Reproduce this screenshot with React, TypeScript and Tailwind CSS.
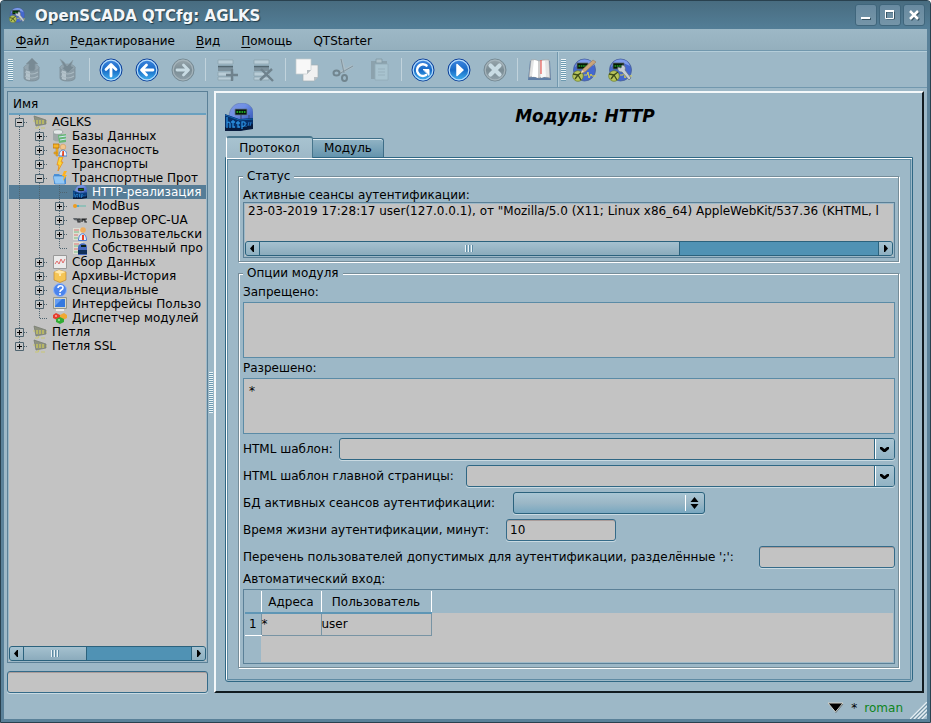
import React, { useState } from "react";

type IconProps = { size?: number };

function Globe({ tool, size = 24 }: { tool?: "pencil" | "wrench"; size?: number }) {
  return (
    <svg width={size} height={size} viewBox="0 0 24 24" aria-hidden="true">
      <circle cx="12.5" cy="12" r="11" fill="#4468cf" stroke="#4a6196" strokeWidth=".8" />
      <path d="M3 9a10 10 0 0 1 19-1Q12 2 3 9" fill="#7d9bea" />
      <path d="M5 5h11v6H5z" fill="#051a05" stroke="#5c6570" strokeWidth=".8" />
      <path d="M6.500 8h8" stroke="#1f9c25" strokeWidth="1.600" strokeDasharray="1.600 .7" />
      <circle cx="6" cy="18" r="5.300" fill="#b8c45b" stroke="#6c7c25" strokeWidth=".7" />
      <path d="M3 21l3-4 3 5M1 16l5 1 4-3" stroke="#3e4d18" strokeWidth="1.300" fill="none" />
      <path d="M12 17h3l1-3 1 6 2-4 1 2h4" stroke="#d9cd50" fill="none" />
      {tool === "pencil" && (
        <>
          <path d="M9 15l2-4L21 2l3 2-11 10z" fill="#c9a57c" stroke="#9a7a5a" strokeWidth=".6" />
          <path d="M9 15l1-3 2 2z" fill="#f1dfc0" />
        </>
      )}
      {tool === "wrench" && (
        <path d="M10 9l3 1 1-3c3 0 4 3 3 5l6 8-2 2-7-8c-3 0-5-2-4-5z" fill="#c5ccd3" stroke="#606d78" strokeWidth=".7" />
      )}
    </svg>
  );
}

function HttpIcon({ size = 28 }: IconProps) {
  return (
    <svg width={size} height={size} viewBox="0 0 28 28" className="shrink-0" aria-hidden="true">
      <defs>
        <linearGradient id={"dome-" + size} x1="0" y1="0" x2="1" y2="1">
          <stop offset="0" stopColor="#8098dc" />
          <stop offset=".4" stopColor="#6f8fe6" />
          <stop offset="1" stopColor="#2347ab" />
        </linearGradient>
      </defs>
      <path d="M4 17C3 6 9 0 17 0c6 0 11 4 11 9v14H4z" fill={"url(#dome-" + size + ")"} stroke="#5a74a8" strokeWidth=".5" />
      <path d="M10 6h12v6H10z" fill="#04140a" stroke="#65778f" strokeWidth=".8" />
      <path d="M11.500 9h9" stroke="#1fa020" strokeWidth="2.200" strokeDasharray="1.700 .8" />
      <path d="M16 12v4M24 12v5M26 15v3" stroke="#3d4f80" strokeWidth="1.300" />
      <path d="M0 11l14 5 14-1v9l-13 4H0z" fill="#06306a" />
      <path d="M0 24l14 1 14-4v5l-13 2H0z" fill="#071a3c" />
      <path d="M0 12l14 5 14-1" stroke="#1463ae" fill="none" />
      <path d="M2 14v11m0-5q3-2 3 1v4M8 17v7h2m-4-5h4M13 18v6h2m-4-4h4M17 26v-7q4-1 3 3-1 2-3 1" stroke="#2b8fdd" strokeWidth="1.300" fill="none" />
      <path d="M21 20v1m0 2v1m2-1l1-4m1 4l1-4" stroke="#2373c0" fill="none" />
    </svg>
  );
}

type RoundKind = "up" | "left" | "right" | "reload" | "play" | "stop";

function Round({ kind }: { kind: RoundKind }) {
  const off = kind === "right" || kind === "stop";
  return (
    <svg width="24" height="24" viewBox="0 0 24 24" aria-hidden="true">
      <defs>
        <linearGradient id={"round-" + kind} x1="0" y1="0" x2="0" y2="1">
          <stop offset="0" stopColor={off ? "#9ba8ae" : "#4287e0"} />
          <stop offset=".5" stopColor={off ? "#7b8d95" : "#176bc7"} />
          <stop offset="1" stopColor={off ? "#90a1aa" : "#45b5f0"} />
        </linearGradient>
      </defs>
      <circle cx="12" cy="12" r="11" fill={"url(#round-" + kind + ")"} stroke={off ? "#768a94" : "#0f3f96"} />
      <circle cx="12" cy="12" r="9.800" fill="none" stroke={off ? "#a5b4bb" : "#b7dcfa"} strokeWidth="1.200" />
      <g stroke={off ? "#c8dbe3" : "#fff"} strokeWidth="2.800" fill="none" strokeLinecap="round" strokeLinejoin="round">
        {kind === "up" && <path d="M12 18V7M7 11.500l5-5 5 5" />}
        {kind === "left" && <path d="M18 12H7M11.500 7l-5 5 5 5" />}
        {kind === "right" && <path d="M6 12h11M12.500 7l5 5-5 5" />}
        {kind === "stop" && <path d="M7.500 7.500l9 9M16.500 7.500l-9 9" strokeWidth="4.200" />}
        {kind === "reload" && (
          <>
            <path d="M15.500 7.500A5.800 5.800 0 1 0 15 17" strokeWidth="2.600" />
            <path d="M12.500 11.500h5.500v5.500z" fill="#fff" strokeWidth="1" />
          </>
        )}
        {kind === "play" && <path d="M10 6.500l6 5.500-6 5.500z" fill="#fff" strokeWidth="1.500" />}
      </g>
    </svg>
  );
}

function Database({ save }: { save?: boolean }) {
  return (
    <svg width="24" height="24" viewBox="0 0 24 24" aria-hidden="true">
      <path d="M5 9v11c0 4 15 4 15 0V9z" fill="#8b9ca6" stroke="#7b8d97" strokeWidth=".8" />
      <path d="M7 12v9q2 1 4 1v-9z" fill="#b4c3cb" />
      <path d="M6 14q7 4 13 0M6 18q7 4 13 0" stroke="#a9b9c1" fill="none" strokeWidth="1.200" />
      <ellipse cx="12.500" cy="9.500" rx="7.500" ry="3.500" fill="#94a5af" stroke="#82949e" strokeWidth=".6" />
      {save ? (
        <path d="M5 1l4 3 3 4 6-6-2 6 3 1-6 6-6-5 2-1z" fill="#788a94" stroke="#8fa2ad" strokeWidth=".6" />
      ) : (
        <path d="M13 0l6 6h-3q1 5-1 7h-5q-1-3 0-7H7z" fill="#788a94" stroke="#8a9ca6" strokeWidth=".6" />
      )}
    </svg>
  );
}

function Rows({ remove }: { remove?: boolean }) {
  return (
    <svg width="24" height="24" viewBox="0 0 24 24" aria-hidden="true">
      <path d="M3 2h15v4H3zM3 14h15v4H3zM3 19h15v3H3z" fill="#b9cdd7" stroke="#8ba0ac" strokeWidth=".7" />
      <path d="M3 8h15v5H3z" fill="#7d919c" />
      <path d="M3 8.500h15" stroke="#52666f" strokeWidth="1.500" />
      {remove ? (
        <path d="M10 11l12 12M21 11L9 22" stroke="#6f828d" strokeWidth="2.400" />
      ) : (
        <path d="M17 11v12M11 17h12" stroke="#6f828d" strokeWidth="2.400" />
      )}
    </svg>
  );
}

function Copy() {
  return (
    <svg width="24" height="24" viewBox="0 0 24 24" aria-hidden="true">
      <path d="M8 7h15v12l-4 4H8z" fill="#f1f1f1" stroke="#a5afb5" strokeWidth=".7" />
      <path d="M19 23v-4h4z" fill="#b9c0c4" />
      <path d="M1 1h15v11l-4 4H1z" fill="#f8f8f8" stroke="#c4cbcf" strokeWidth=".7" />
      <path d="M12 16v-4h4z" fill="#b5bcc0" />
    </svg>
  );
}

function Scissors() {
  return (
    <svg width="24" height="24" viewBox="0 0 24 24" fill="none" aria-hidden="true">
      <path d="M10 1l4 13M22 8L8 15" stroke="#abbcc5" strokeWidth="2.600" />
      <path d="M10 1l3 14M22 8L8 16" stroke="#81949e" />
      <ellipse cx="5.500" cy="15" rx="3" ry="2.500" stroke="#71858f" strokeWidth="2" />
      <ellipse cx="13.500" cy="20" rx="2.500" ry="3" stroke="#71858f" strokeWidth="2" />
    </svg>
  );
}

function Paste() {
  return (
    <svg width="24" height="24" viewBox="0 0 24 24" aria-hidden="true">
      <path d="M4 3h16v18H4z" fill="#8ca2ad" />
      <path d="M9 1h6v4H9z" fill="#adc0c9" stroke="#8299a4" strokeWidth=".8" />
      <path d="M8 6h13v16H8z" fill="#a8c3cf" stroke="#93abb7" strokeWidth=".8" />
      <path d="M11 11h7M11 14h7M11 17h7" stroke="#98b1bd" />
    </svg>
  );
}

function Book() {
  return (
    <svg width="24" height="24" viewBox="0 0 24 24" aria-hidden="true">
      <path d="M3 3h20l1 19H1z" fill="#5f7ea6" />
      <path d="M4 2q4-1 8 1 5-2 10-1l1 18q-6-2-11 0-5-2-10-1z" fill="#e4e4e4" stroke="#9e9e9e" strokeWidth=".6" />
      <path d="M11 3v17q-4-2-6-1L7 2z" fill="#fff" />
      <path d="M14 3v17q5-2 5-1L18 3z" fill="#f8f8f8" />
      <path d="M12 3v17" stroke="#b9b9b9" />
      <path d="M14 2v14" stroke="#e85b55" strokeWidth="1.200" />
    </svg>
  );
}

type TreeIconKind = "station" | "db" | "security" | "bolt" | "folder" | "http" | "modbus" | "opc" | "user" | "own" | "chart" | "box" | "help" | "screen" | "modules";

function TreeIcon({ kind }: { kind: TreeIconKind }) {
  if (kind === "http") return <HttpIcon size={14} />;
  return (
    <svg width="14" height="14" viewBox="0 0 14 14" className="shrink-0" aria-hidden="true">
      {kind === "station" && (
        <>
          <path d="M1 1l12 4v4L3 11z" fill="#8d917f" stroke="#747a6e" strokeWidth=".7" />
          <path d="M4 5v4M7 5v4M10 5v4" stroke="#c9c65a" strokeWidth="1.400" />
          <path d="M2 13h3l1-2m2 2h4M0 6h2m11 1h1" stroke="#c9c775" strokeWidth="1.200" fill="none" />
        </>
      )}
      {kind === "db" && (
        <>
          <path d="M0 3v8q5 3 9 0V3z" fill="#9fa8a8" />
          <ellipse cx="5" cy="3" rx="4.800" ry="2.300" fill="#e4e8e8" stroke="#858e8e" strokeWidth=".6" />
          <path d="M5 6l8-1v8l-7 1z" fill="#68b776" />
          <path d="M6 8l7-1M7 11l6-1" stroke="#d5e8fa" strokeWidth="1" />
        </>
      )}
      {kind === "security" && (
        <>
          <path d="M3 4h2v9H3zM1 9h3v2H1z" fill="#efb72d" stroke="#c07d10" strokeWidth=".5" />
          <path d="M0 1h6v4H0z" fill="#f5b428" stroke="#b97407" strokeWidth=".8" />
          <circle cx="10" cy="4" r="2.800" fill="#f3c58b" stroke="#ce914b" strokeWidth=".5" />
          <path d="M6 13c0-8 8-8 8 0z" fill="#eef3fb" stroke="#4c7fc4" strokeWidth="1" />
          <path d="M9.300 8H11v5H9z" fill="#e24826" />
        </>
      )}
      {kind === "bolt" && <path d="M6 0h4L8 5h2L5 14l1-6H4z" fill="#fbd638" stroke="#e88c18" strokeWidth=".8" />}
      {kind === "folder" && (
        <>
          <path d="M1 3h5l1 1h6v9H1z" fill="#4a91d9" />
          <path d="M0 5h11l1 8H2z" fill="#91c7f6" stroke="#3d7fc7" strokeWidth=".6" />
          <path d="M11 0h3l-2 4h2l-4 6 1-5H9z" fill="#ffb31f" />
        </>
      )}
      {kind === "modbus" && (
        <>
          <path d="M3 7h10" stroke="#4da9d0" strokeWidth="2" />
          <path d="M6 7h7" stroke="#d8d5a0" />
          <circle cx="2" cy="7" r="2" fill="#ee9c20" />
        </>
      )}
      {kind === "opc" && (
        <>
          <path d="M0 5h4l2 3-5-1z" fill="#61666b" />
          <path d="M5 9V6h2v3zm4 0V6h2v1H9m5-1h-2v3h2" stroke="#242628" fill="none" strokeWidth="1.200" />
        </>
      )}
      {(kind === "user" || kind === "own") && (
        <>
          <path d="M0 1h10v12H0z" fill="#dedfd4" />
          <path d="M1 3h5M1 8h4" stroke="#dc7474" />
          <path d="M1 5h5M1 11h4" stroke="#78ba82" />
        </>
      )}
      {kind === "user" && (
        <>
          <circle cx="10" cy="3" r="2.800" fill="#eead5c" />
          <path d="M5.500 13.500c0-9 8-9 8 0z" fill="#e7edf7" stroke="#4777d0" strokeWidth="1" />
          <path d="M9 8h2v5H9z" fill="#ea4324" />
        </>
      )}
      {kind === "own" && (
        <>
          <path d="M5 14V7c0-6 9-6 9-1v8z" fill="#4569bd" />
          <path d="M8 4h5v2H8z" fill="#0c2115" />
          <path d="M5 9h9v4H5z" fill="#102f59" />
        </>
      )}
      {kind === "chart" && (
        <>
          <path d="M.5.5h13v13H.5z" fill="#ebebeb" stroke="#999" />
          <path d="M2 9l2-3 2 3 2-5 2 4 2-4" fill="none" stroke="#e06b6b" />
        </>
      )}
      {kind === "box" && (
        <>
          <path d="M1 3l5-2 7 2v8l-6 2.500L1 11z" fill="#f5c555" stroke="#ba7e22" strokeWidth=".6" />
          <path d="M1 3l6 2 6-2-7-2z" fill="#ffe9ac" />
          <path d="M7 5v2" stroke="#ffe9ac" strokeWidth="2" />
        </>
      )}
      {kind === "help" && (
        <>
          <circle cx="7" cy="7" r="6.500" fill="#4b84ed" stroke="#91b3f5" />
          <path d="M5 5c0-3 5-3 5-.3C10 7 7 6.500 7 9" stroke="#fff" strokeWidth="1.600" fill="none" />
          <circle cx="7" cy="11" r="1" fill="#fff" />
        </>
      )}
      {kind === "screen" && (
        <>
          <path d="M.5.500h13v11H.5z" fill="#d7d7c8" stroke="#92978f" />
          <path d="M2 2h10v8H2z" fill="#3479df" />
          <path d="M2 2h7L2 9z" fill="#669ef2" />
          <path d="M3 13h8" stroke="#ededed" strokeWidth="2" />
        </>
      )}
      {kind === "modules" && (
        <>
          <path d="M0 4l3-2 4 2v3L4 9 0 7z" fill="#e63d2d" />
          <path d="M7 4l4-2 3 2v3l-4 2-3-2z" fill="#f1a832" />
          <path d="M3 8l4-2 4 2v3l-4 2-4-2z" fill="#32ac35" />
          <circle cx="6" cy="9" r="1" fill="#a5ed97" />
          <circle cx="3" cy="5" r="1" fill="#ffaaa0" />
        </>
      )}
    </svg>
  );
}

type Node = { level: number; text: string; icon: TreeIconKind; box?: "+" | "-"; last?: boolean };

const nodes: Node[] = [
  { level: 0, text: "AGLKS", icon: "station", box: "-" },
  { level: 1, text: "Базы Данных", icon: "db", box: "+" },
  { level: 1, text: "Безопасность", icon: "security", box: "+" },
  { level: 1, text: "Транспорты", icon: "bolt", box: "+" },
  { level: 1, text: "Транспортные Прот", icon: "folder", box: "-" },
  { level: 2, text: "HTTP-реализация", icon: "http" },
  { level: 2, text: "ModBus", icon: "modbus", box: "+" },
  { level: 2, text: "Сервер OPC-UA", icon: "opc", box: "+" },
  { level: 2, text: "Пользовательски", icon: "user", box: "+" },
  { level: 2, text: "Собственный про", icon: "own", last: true },
  { level: 1, text: "Сбор Данных", icon: "chart", box: "+" },
  { level: 1, text: "Архивы-История", icon: "box", box: "+" },
  { level: 1, text: "Специальные", icon: "help", box: "+" },
  { level: 1, text: "Интерфейсы Пользо", icon: "screen", box: "+" },
  { level: 1, text: "Диспетчер модулей", icon: "modules", last: true },
  { level: 0, text: "Петля", icon: "station", box: "+" },
  { level: 0, text: "Петля SSL", icon: "station", box: "+", last: true },
];

function Guide() {
  return (
    <svg width="20" height="14" viewBox="0 0 20 14" className="shrink-0" aria-hidden="true">
      <path d="M10.500 0v14" stroke="#4f6470" strokeDasharray="1 1" />
    </svg>
  );
}

function Branch({ box, last }: { box?: "+" | "-"; last?: boolean }) {
  return (
    <svg width="20" height="14" viewBox="0 0 20 14" className="shrink-0" aria-hidden="true">
      <path d={last ? "M10.500 0v8" : "M10.500 0v14"} stroke="#4f6470" strokeDasharray="1 1" />
      <path d="M11 7.500h8" stroke="#4f6470" strokeDasharray="1 1" />
      {box && <path d="M6.500 3.500h8v8h-8z" fill="#c3c3c3" stroke="#4f6470" />}
      {box && <path d={box === "+" ? "M8 7.500h5M10.500 5v5" : "M8 7.500h5"} stroke="#000" />}
    </svg>
  );
}

function TreeRow({ node, selected, onSelect }: { node: Node; selected: boolean; onSelect: () => void }) {
  return (
    <li role="treeitem" aria-selected={selected}>
      <button
        type="button"
        onClick={onSelect}
        className={
          selected
            ? "flex h-[14px] w-full items-center overflow-hidden bg-[#567d97] text-left leading-[14px] whitespace-nowrap text-white"
            : "flex h-[14px] w-full items-center overflow-hidden text-left leading-[14px] whitespace-nowrap"
        }
      >
        {Array.from({ length: node.level }, (_, i) => (
          <Guide key={i} />
        ))}
        <Branch box={node.box} last={node.last} />
        <span className="ml-1 flex w-[19px] shrink-0">
          <TreeIcon kind={node.icon} />
        </span>
        {node.text}
      </button>
    </li>
  );
}

function Arrow({ dir }: { dir: "left" | "right" | "down" }) {
  return (
    <svg width="9" height="9" viewBox="0 0 9 9" aria-hidden="true">
      {dir === "left" && <path d="M6 1v7H5L2 4.500 5 1z" fill="#000" />}
      {dir === "right" && <path d="M3 1v7h1l3-3.500L4 1z" fill="#000" />}
      {dir === "down" && <path d="M0 2h2l2.500 2L7 2h2v2L5.500 7h-2L0 4z" fill="#000" />}
    </svg>
  );
}

function ScrollBar({ thumb }: { thumb: string }) {
  return (
    <div className="flex h-[15px] shrink-0 overflow-hidden rounded-[3px] border border-[#2b627d] bg-[#5092b4]">
      <button type="button" aria-label="Назад" className="flex w-[14px] shrink-0 items-center justify-center border-r border-[#2b627d] bg-linear-to-b from-[#a7c3d1] to-[#8eb0c1]">
        <Arrow dir="left" />
      </button>
      <div className="flex min-w-0 flex-1">
        <div className={thumb}>
          <div className="h-[7px] w-[9px] bg-[repeating-linear-gradient(to_right,#eaf4f8_0_1px,#5c8ba4_1px_2px,#9cb9c8_2px_3px)]" />
        </div>
      </div>
      <button type="button" aria-label="Вперёд" className="flex w-[14px] shrink-0 items-center justify-center border-l border-[#2b627d] bg-linear-to-b from-[#a7c3d1] to-[#8eb0c1]">
        <Arrow dir="right" />
      </button>
    </div>
  );
}

function Tool({ label, children }: { label: string; children: React.ReactNode }) {
  return (
    <button type="button" aria-label={label} className="flex h-[35px] w-9 shrink-0 items-center justify-center">
      {children}
    </button>
  );
}

function Sep() {
  return (
    <div className="flex w-2 shrink-0 justify-center">
      <div className="h-[23px] w-px bg-[#c1d3dc]" />
    </div>
  );
}

function Grip() {
  return <div className="h-[22px] w-[5px] shrink-0 bg-[repeating-linear-gradient(to_bottom,#edf5f8_0_1px,#6e9ab0_1px_2px)]" />;
}

function Combo({ id, label, labelClass }: { id: string; label: string; labelClass: string }) {
  return (
    <div className="flex h-[22px] items-center gap-[6px]">
      <label htmlFor={id} className={"shrink-0 whitespace-nowrap " + labelClass}>{label}</label>
      <div className="relative h-[22px] min-w-0 flex-1">
        <select id={id} className="block h-full w-full appearance-none rounded-[3px] border border-[#2f6784] bg-[#c3c3c3] shadow-[0_1px_0_#c9dae2]">
          <option></option>
        </select>
        <span className="pointer-events-none absolute top-px right-px bottom-px flex w-[19px] items-center justify-center rounded-r-[2px] border-l border-white bg-linear-to-b from-[#a9c4d2] to-[#92b3c4] pr-[2px] shadow-[-1px_0_0_#2f6784]">
          <Arrow dir="down" />
        </span>
      </div>
    </div>
  );
}

const groupBox = "min-w-0 border border-[#768d99] pr-[3px] pl-1 shadow-[inset_1px_1px_0_#fff,1px_1px_0_#fff]";
const textField = "rounded-[3px] border border-[#356b89] bg-[#c3c3c3] px-[3px] shadow-[inset_0_1px_0_#a99c9a,0_1px_0_#c9dae2] outline-none";
const textArea = "block h-14 w-full shrink-0 resize-none border border-[#5b8ba6] bg-[#c3c3c3] px-[5px] py-[3px] outline-none";
const windowButton = "flex size-[22px] items-center justify-center rounded-[3px] border border-[#40667c] bg-linear-to-b from-[#688aa0] to-[#7595a8]";

export default function App() {
  const [selected, setSelected] = useState(5);
  const [tab, setTab] = useState(0);
  return (
    <div className="flex h-screen min-h-[600px] w-full flex-col overflow-hidden rounded-t-[4px] border border-[#29414f] bg-[#5a8199] font-['DejaVu_Sans',sans-serif] text-[12px] text-black">
      <header className="flex h-7 shrink-0 items-center bg-linear-to-b from-[#486c80] to-[#537e97] pr-[5px] pl-2">
        <Globe tool="wrench" size={16} />
        <h1 className="ml-[10px] flex-1 pt-[2px] text-[15px] font-bold text-[#f4f7f9] [text-shadow:1px_1px_1px_#1f3a48]">OpenSCADA QTCfg: AGLKS</h1>
        <div className="flex gap-[2px]">
          <button type="button" aria-label="Свернуть" className={windowButton}>
            <svg width="12" height="12" viewBox="0 0 12 12"><path d="M2 10h9" stroke="#385463" strokeWidth="2" /><path d="M1 9h9" stroke="#fff" strokeWidth="2" /></svg>
          </button>
          <button type="button" aria-label="Развернуть" className={windowButton}>
            <svg width="12" height="12" viewBox="0 0 12 12" fill="none"><path d="M2.500 3h8v7h-8z" stroke="#385463" /><path d="M1.500 2.500h8v7h-8z" stroke="#fff" /><path d="M1 2h9" stroke="#fff" strokeWidth="2" /></svg>
          </button>
          <button type="button" aria-label="Закрыть" className={windowButton}>
            <svg width="12" height="12" viewBox="0 0 12 12" fill="none"><path d="M3 3l8 8M11 3l-8 8" stroke="#385463" strokeWidth="2.500" /><path d="M2 2l8 8M10 2l-8 8" stroke="#fff" strokeWidth="2.500" /></svg>
          </button>
        </div>
      </header>

      <div className="mx-[3px] mb-[3px] flex min-h-0 flex-1 flex-col bg-[#9db8c7]">
        <nav className="flex h-[22px] shrink-0 items-center gap-[21px] border-b border-[#7298ae] bg-linear-to-b from-[#9db8c6] to-[#94afbd] px-3 pt-[2px]">
          <button type="button"><u className="underline-offset-2">Ф</u>айл</button>
          <button type="button"><u className="underline-offset-2">Р</u>едактирование</button>
          <button type="button"><u className="underline-offset-2">В</u>ид</button>
          <button type="button"><u className="underline-offset-2">П</u>омощь</button>
          <button type="button">QTStarter</button>
        </nav>

        <div className="flex h-[37px] shrink-0 items-center border-t border-b border-t-[#b4cdd9] border-b-[#7298ae] pl-1" role="toolbar">
          <Grip />
          <Tool label="Загрузить"><Database /></Tool>
          <Tool label="Сохранить"><Database save /></Tool>
          <Sep />
          <Tool label="Вверх"><Round kind="up" /></Tool>
          <Tool label="Назад"><Round kind="left" /></Tool>
          <Tool label="Вперёд"><Round kind="right" /></Tool>
          <Sep />
          <Tool label="Добавить"><Rows /></Tool>
          <Tool label="Удалить"><Rows remove /></Tool>
          <Sep />
          <Tool label="Копировать"><Copy /></Tool>
          <Tool label="Вырезать"><Scissors /></Tool>
          <Tool label="Вставить"><Paste /></Tool>
          <Sep />
          <Tool label="Обновить"><Round kind="reload" /></Tool>
          <Tool label="Запустить"><Round kind="play" /></Tool>
          <Tool label="Остановить"><Round kind="stop" /></Tool>
          <Sep />
          <Tool label="Руководство"><Book /></Tool>
          <div className="mr-[3px] h-full w-px bg-[#7298ae] shadow-[1px_0_0_#b4cdd9]" />
          <Grip />
          <Tool label="Разработка"><Globe tool="pencil" /></Tool>
          <Tool label="Конфигурация"><Globe tool="wrench" /></Tool>
        </div>

        <main className="flex min-h-0 flex-1 px-[3px] pt-[3px]">
          <aside className="flex w-[201px] shrink-0 flex-col">
            <div className="flex min-h-0 flex-1 flex-col border border-[#5b8097] p-px">
              <div className="flex h-[22px] shrink-0 items-center border-b-2 border-[#69a0bf] pt-[2px] pl-1">Имя</div>
              <div className="flex min-h-0 flex-1 flex-col bg-[#c3c3c3]">
                <ul role="tree" className="min-h-0 flex-1 overflow-hidden">
                  {nodes.map((n, i) => (
                    <TreeRow key={i} node={n} selected={selected === i} onSelect={() => setSelected(i)} />
                  ))}
                </ul>
                <ScrollBar thumb="flex w-[38%] items-center justify-center border-r border-[#2b627d] bg-linear-to-b from-[#a5c1cf] to-[#8babbc]" />
              </div>
            </div>
            <input aria-label="Имя элемента" className={"mt-2 h-[22px] w-full shrink-0 " + textField} />
          </aside>

          <div className="flex w-[6px] shrink-0 items-center justify-center">
            <div className="h-[41px] w-[4px] bg-[repeating-linear-gradient(to_bottom,#edf5f8_0_1px,#6e9ab0_1px_2px)]" />
          </div>

          <section className="flex min-w-0 flex-1 flex-col border-2 border-t-[#f4f8fa] border-r-[#111b20] border-b-[#111b20] border-l-[#f4f8fa] px-[9px] pb-[9px]">
            <div className="flex h-[43px] shrink-0 items-center pt-1">
              <HttpIcon />
              <h2 className="flex-1 pl-1 text-center text-[17px] font-bold italic">Модуль: HTTP</h2>
            </div>
            <div role="tablist" className="relative -mb-px flex h-[22px] shrink-0 items-end pl-px">
              <button type="button" role="tab" aria-selected={tab === 0} onClick={() => setTab(0)} className="h-[22px] w-[87px] rounded-t-[3px] border border-t-2 border-b-0 border-[#47758c] border-l-white bg-linear-to-b from-[#a8c3d0] to-[#9db8c7]">
                Протокол
              </button>
              <button type="button" role="tab" aria-selected={tab === 1} onClick={() => setTab(1)} className="mb-px h-[19px] w-[71px] rounded-tr-[3px] border border-b-0 border-l-0 border-[#3d6d87] bg-linear-to-b from-[#92b4c5] to-[#6494ad] shadow-[inset_0_1px_0_#d8e6ed]">
                Модуль
              </button>
            </div>
            <div role="tabpanel" className="flex min-h-0 flex-1 rounded-b-[3px] border border-[#2f6784] shadow-[inset_1px_1px_0_#fff]">
              <div className="m-px flex min-w-0 flex-1 flex-col border border-[#5f8ba3] px-[10px] pt-2 pb-[11px]">
                <fieldset className={groupBox + " mr-px h-[94px] shrink-0 pb-[3px]"}>
                  <legend className="h-4 bg-[#9db8c7] px-1 leading-4">Статус</legend>
                  <p className="mt-[3px] h-[15px] leading-[17px]">Активные сеансы аутентификации:</p>
                  <div className="flex h-14 flex-col border border-[#5b8097] p-px">
                    <div className="flex min-h-0 flex-1 flex-col bg-[#c3c3c3]">
                      <p className="min-h-0 flex-1 overflow-hidden pl-[3px] leading-[14px] whitespace-nowrap">
                        23-03-2019 17:28:17 user(127.0.0.1), от "Mozilla/5.0 (X11; Linux x86_64) AppleWebKit/537.36 (KHTML, l
                      </p>
                      <ScrollBar thumb="flex w-[68%] items-center justify-center border-r border-[#2b627d] bg-linear-to-b from-[#a5c1cf] to-[#8babbc]" />
                    </div>
                  </div>
                </fieldset>

                <fieldset className={groupBox + " mt-[3px] mr-px flex flex-1 flex-col pb-[3px]"}>
                  <legend className="h-4 bg-[#9db8c7] px-1 leading-4">Опции модуля</legend>
                  <div className="flex h-full flex-col">
                    <label htmlFor="deny" className="mt-[2px] block h-[19px] leading-[18px]">Запрещено:</label>
                    <textarea id="deny" className={textArea} />
                    <label htmlFor="allow" className="mt-px block h-[19px] leading-[18px]">Разрешено:</label>
                    <textarea id="allow" defaultValue="*" className={textArea} />
                    <div className="mt-1 flex flex-col gap-[5px]">
                      <Combo id="tmpl" label="HTML шаблон:" labelClass="w-[90px]" />
                      <Combo id="main" label="HTML шаблон главной страницы:" labelClass="w-[217px]" />
                      <div className="flex h-[22px] items-center gap-[6px]">
                        <label htmlFor="db" className="w-[264px] shrink-0 whitespace-nowrap">БД активных сеансов аутентификации:</label>
                        <div className="relative h-[22px] w-48">
                          <select id="db" className="block h-full w-full appearance-none rounded-[3px] border border-[#2b627d] bg-linear-to-b from-[#a9c6d4] via-[#9bb7c6] to-[#78a7c0] shadow-[0_1px_0_#c9dae2]">
                            <option></option>
                          </select>
                          <span className="pointer-events-none absolute top-[3px] right-px flex h-4 w-[19px] items-center justify-center border-l border-white pr-[2px]">
                            <svg width="9" height="12" viewBox="0 0 9 12"><path d="M4.500 0L8.500 5h-8zM4.500 12L.5 7h8z" /></svg>
                          </span>
                        </div>
                      </div>
                      <div className="flex h-[22px] items-center gap-[6px]">
                        <label htmlFor="life" className="w-[257px] shrink-0 whitespace-nowrap">Время жизни аутентификации, минут:</label>
                        <input id="life" defaultValue="10" className={"h-[22px] w-[110px] " + textField} />
                      </div>
                      <div className="flex h-[22px] items-center gap-[6px]">
                        <label htmlFor="users" className="w-[510px] shrink-0 whitespace-nowrap">Перечень пользователей допустимых для аутентификации, разделённые ';':</label>
                        <input id="users" className={"h-[22px] min-w-0 flex-1 " + textField} />
                      </div>
                    </div>
                    <p className="mt-[2px] h-[19px] shrink-0 leading-[18px]">Автоматический вход:</p>
                    <div className="flex min-h-[60px] flex-1 flex-col border border-[#5b8097] p-px">
                      <div className="flex-1 bg-[linear-gradient(to_right,#9db8c7_16px,#c3c3c3_16px)]">
                        <div className="bg-[linear-gradient(to_bottom,#9db8c7_22px,transparent_22px)]">
                          <table className="table-fixed border-collapse text-left">
                            <colgroup>
                              <col className="w-4" />
                              <col className="w-[60px]" />
                              <col className="w-[110px]" />
                            </colgroup>
                            <thead>
                              <tr className="h-[22px] border-b-2 border-[#5f96b5]">
                                <th className="border-r border-white p-0"></th>
                                <th className="border-r border-white p-0 text-center font-normal">Адреса</th>
                                <th className="border-r border-white p-0 text-center font-normal">Пользователь</th>
                              </tr>
                            </thead>
                            <tbody>
                              <tr className="h-[22px]">
                                <th className="border-r border-b border-r-[#7894a4] border-b-white p-0 text-center font-normal">1</th>
                                <td className="border-r border-b border-[#7894a4] p-0">*</td>
                                <td className="border-r border-b border-[#7894a4] p-0">user</td>
                              </tr>
                            </tbody>
                          </table>
                        </div>
                      </div>
                    </div>
                  </div>
                </fieldset>
              </div>
            </div>
          </section>
        </main>

        <footer className="flex h-[26px] shrink-0 items-end">
          <div className="flex flex-1 items-center justify-end gap-[7px] pr-[7px] pb-[2px]">
            <svg width="17" height="12" viewBox="0 0 17 12" aria-hidden="true"><path d="M1 1h15L8.500 10z" fill="#000" stroke="#d2d2ca" /><path d="M8.500 11L16 2" stroke="#747c7e" /></svg>
            <span>*</span>
            <span className="text-[#0e8420]">roman</span>
          </div>
          <svg width="17" height="17" viewBox="0 0 17 17" aria-hidden="true">
            <path d="M0 17L17 0M4 17L17 4M8 17l9-9M12 17l5-5" stroke="#e8f0f4" strokeWidth="1.200" />
            <path d="M2 17L17 2M6 17L17 6M10 17l7-7" stroke="#7897a8" />
          </svg>
        </footer>
      </div>
    </div>
  );
}
